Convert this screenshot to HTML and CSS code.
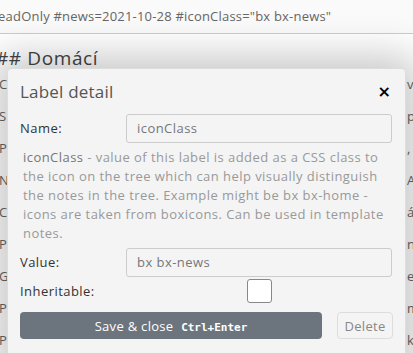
FILE: index.html
```html
<!DOCTYPE html>
<html lang="en">
<head>
    <meta charset="UTF-8">
    <meta name="viewport" content="width=device-width, initial-scale=1.0">
    <title>Label detail</title>
    <link rel="stylesheet" href="styles.css">
</head>
<body>
    <div class="note-title">#readOnly #news=2021-10-28 #iconClass="bx bx-news"</div>

    <div class="note-content">
        <h2 class="heading">## Domácí</h2>
        <div class="line"><span>Celý</span><span>v</span></div>
        <div class="line"><span>Slo</span><span>p</span></div>
        <div class="line"><span>Pil</span><span>,</span></div>
        <div class="line"><span>Ná</span><span>Ai</span></div>
        <div class="line"><span>Ces</span><span>á</span></div>
        <div class="line"><span>Pod</span><span>n</span></div>
        <div class="line"><span>Gl</span><span>e</span></div>
        <div class="line"><span>Pil</span><span>m</span></div>
        <div class="line"><span>Pod</span><span>k</span></div>
    </div>

    <div class="dialog">
        <div class="dialog-header">
            <h5 class="dialog-title">Label detail</h5>
            <button class="close">&times;</button>
        </div>
        <div class="dialog-body">
            <div class="form-row">
                <label>Name:</label>
                <input class="field" type="text" value="iconClass">
            </div>
            <p class="help"><strong>iconClass</strong> - value of this label is added as a CSS class to the icon on the tree which can help visually distinguish the notes in the tree. Example might be bx bx-home - icons are taken from boxicons. Can be used in template notes.</p>
            <div class="form-row">
                <label>Value:</label>
                <input class="field" type="text" value="bx bx-news">
            </div>
            <div class="form-row check-row">
                <label>Inheritable:</label>
                <span class="checkbox"></span>
            </div>
            <div class="actions">
                <button class="save">Save &amp; close <kbd>Ctrl+Enter</kbd></button>
                <button class="delete">Delete</button>
            </div>
        </div>
    </div>
</body>
</html>
```

FILE: styles.css
```css
* {
    box-sizing: border-box;
    margin: 0;
    padding: 0;
}

body {
    font-family: "Open Sans", sans-serif;
    font-size: 13px;
    letter-spacing: 0.45px;
    color: #333;
    background: #fff;
    overflow: hidden;
}

.note-title {
    height: 34px;
    padding-top: 7px;
    border-bottom: 1px solid #ccc;
    background: #fafafa;
    color: #666;
    white-space: nowrap;
    text-indent: -16px;
    letter-spacing: 0.2px;
}

.note-content {
    padding-top: 11px;
}

.heading {
    font-weight: normal;
    font-size: 19px;
    color: #444;
    text-indent: -4px;
    letter-spacing: 0.6px;
    margin-bottom: 4px;
}

.line {
    display: flex;
    justify-content: space-between;
    height: 32px;
    color: #666;
    white-space: nowrap;
}

.line span:first-child {
    margin-left: -1px;
}

.line span:last-child {
    width: 6px;
}

.dialog {
    position: absolute;
    left: 7px;
    top: 68px;
    width: 399px;
    height: 300px;
    background: #f4f4f4;
    border: 1px solid #ddd;
    border-radius: 4px;
    box-shadow: 0 0 40px 12px rgba(0, 0, 0, 0.22);
}

.dialog-header {
    display: flex;
    justify-content: space-between;
    align-items: center;
    padding: 0 12px;
    height: 44px;
}

.dialog-title {
    font-size: 17px;
    font-weight: normal;
    letter-spacing: 0.2px;
    color: #555;
}

.close {
    border: none;
    background: none;
    font-family: "DejaVu Sans", sans-serif;
    font-size: 16px;
    font-weight: bold;
    color: #000;
    margin-right: 2px;
    cursor: pointer;
}

.dialog-body {
    padding: 0 12px;
}

.form-row {
    display: flex;
    align-items: center;
    height: 30px;
}

.form-row label {
    width: 106px;
}

.field {
    width: 266px;
    height: 29px;
    padding: 0 10px;
    border: 1px solid #ccc;
    border-radius: 3px;
    background: #f4f4f4;
    font-family: inherit;
    font-size: 13px;
    letter-spacing: 0.45px;
    color: #777;
}

.help {
    color: #999;
    line-height: 19px;
    padding: 5px 0 4px 3px;
}

.help strong {
    font-weight: normal;
    color: #777;
}

.check-row {
    height: 28px;
}

.checkbox {
    display: block;
    width: 25px;
    height: 24px;
    margin-left: 121px;
    border: 1px solid #888;
    border-radius: 3px;
    background: #fff;
}

.actions {
    display: flex;
    justify-content: space-between;
    margin-top: 7px;
}

.save {
    width: 302px;
    height: 27px;
    border: none;
    border-radius: 4px;
    background: #6c757d;
    color: #fff;
    font-family: inherit;
    font-size: 13px;
    letter-spacing: 0.3px;
}

.save kbd {
    font-family: "DejaVu Sans Mono", monospace;
    font-size: 11px;
    font-weight: bold;
    letter-spacing: 0;
    margin-left: 4px;
}

.delete {
    width: 56px;
    height: 27px;
    border: 1px solid #ddd;
    border-radius: 4px;
    background: #f4f4f4;
    color: #888;
    font-family: inherit;
    font-size: 13px;
    letter-spacing: 0.3px;
}
```
